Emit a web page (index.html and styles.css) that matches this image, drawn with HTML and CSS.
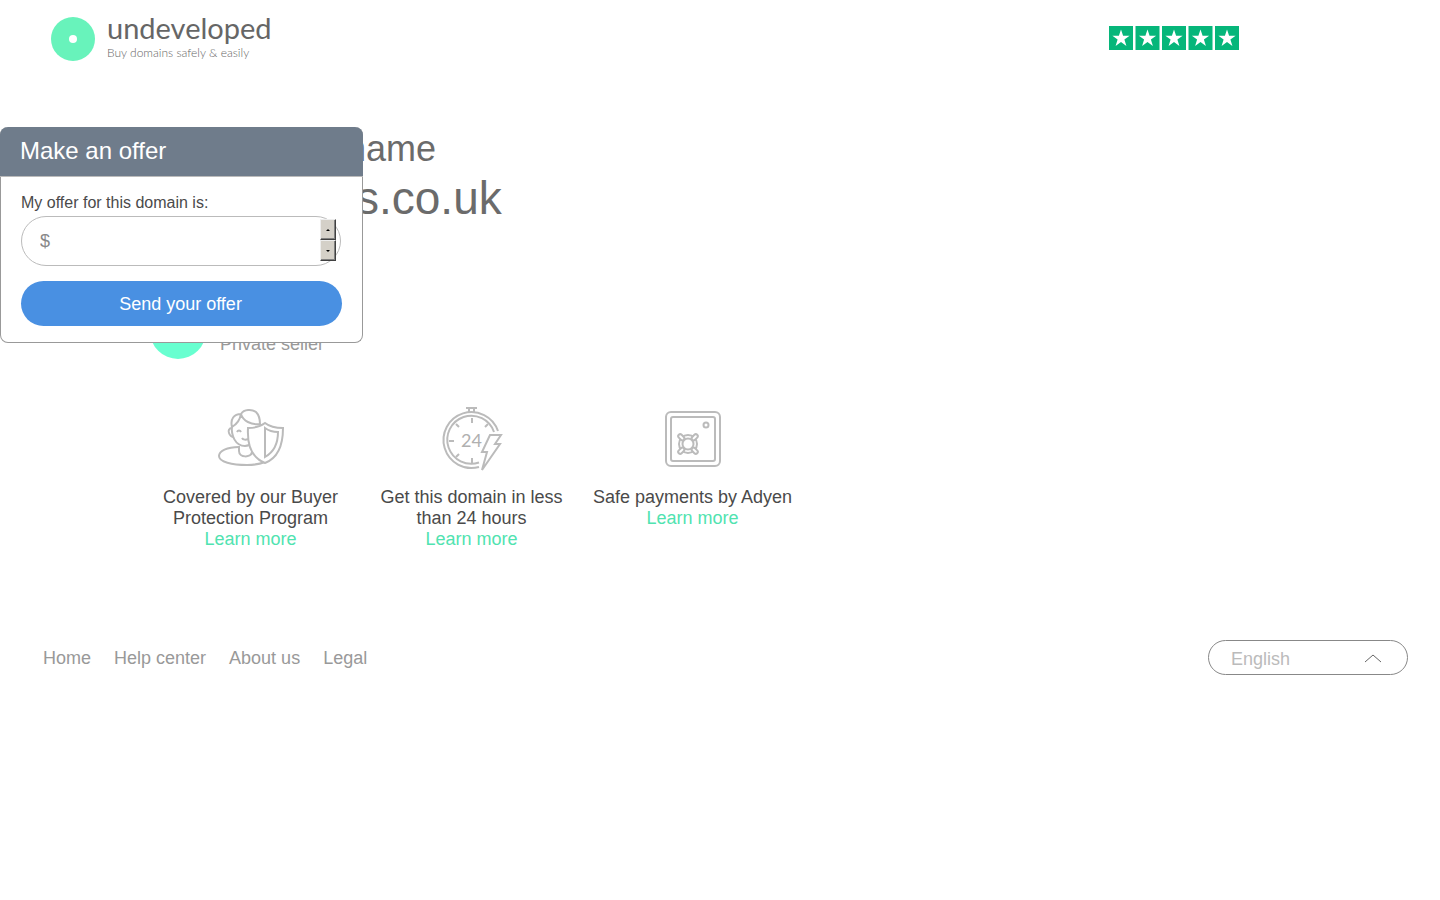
FILE: index.html
```
<!doctype html>
<html lang="en">
<head>
    <meta charset="UTF-8">
    <title>Undeveloped</title>
    <link rel="stylesheet" href="styles.css">
</head>
<body>
    <header class="header">
        <a class="logo" href="#">
            <svg width="44" height="44" viewBox="0 0 44 44" aria-hidden="true">
                <circle cx="22" cy="22" r="22" fill="#68f3bb"/>
                <circle cx="22" cy="22" r="4" fill="#fff"/>
            </svg>
            <span class="logo-text">
                <span class="logo-name">undeveloped</span>
                <span class="logo-tagline">Buy domains safely &amp; easily</span>
            </span>
        </a>
        <svg class="rating" width="130" height="24" viewBox="0 0 130 24" role="img" aria-label="5 stars">
            <defs>
                <g id="star">
                    <rect width="24" height="24" fill="#06b67a"/>
                    <path d="M12 3.5l2.1 6.2h6.5l-5.2 3.9 2 6.3-5.4-3.9-5.4 3.9 2-6.3-5.2-3.9h6.5z" fill="#fff"/>
                </g>
            </defs>
            <use href="#star" x="0"/>
            <use href="#star" x="26.5"/>
            <use href="#star" x="53"/>
            <use href="#star" x="79.5"/>
            <use href="#star" x="106"/>
        </svg>
    </header>

    <main class="main">
        <div class="title">
            <h2>name</h2>
            <h1>s.co.uk</h1>
        </div>
        <div class="seller">
            <span class="avatar"></span>
            <span>Private seller</span>
        </div>

        <form class="offer">
            <h3 class="offer-title">Make an offer</h3>
            <div class="offer-body">
                <label for="amount">My offer for this domain is:</label>
                <div class="amount-wrap">
                    <input type="number" id="amount" name="amount" placeholder="$">
                    <div class="spinner">
                        <button type="button" aria-label="Increase"><svg width="4" height="2" viewBox="0 0 4 2"><path d="M0 2L2 0L4 2z"/></svg></button>
                        <button type="button" aria-label="Decrease"><svg width="4" height="2" viewBox="0 0 4 2"><path d="M0 0L2 2L4 0z"/></svg></button>
                    </div>
                </div>
                <button type="submit" class="send">Send your offer</button>
            </div>
        </form>

        <div class="features">
            <div class="feature">
                <svg class="icon" width="68" height="68" viewBox="0 0 68 68" aria-hidden="true">
                    <path d="M22 43C10 43 2 47 2 52c0 6 13 9 28 9 7 0 13-1 18-3"/>
                    <path d="M22 42v5c0 7 12 7 13 1"/>
                    <path d="M15 22c-1 9 3 20 13 20 3 0 5-1 7-3"/>
                    <path d="M15 24c-3 0-4 3-3 5 1 3 2 4 5 4"/>
                    <path d="M15 23C13 15 17 10 24 10c3-5 11-5 15-2 3 3 4 7 4 12-9 1-17-3-19-10-1 6-4 10-9 13z"/>
                    <path d="M20 28c1-2 3-2 4 0M25 34c1 2 4 2 6 1"/>
                    <path d="M31 24c6 0 12-1 17-5 5 4 11 5 18 5 0 18-5 30-18 35-13-5-18-17-17-35z" fill="#fff"/>
                    <path d="M48 24c4 3 8 4 13 4 0 12-4 20-13 25z"/>
                </svg>
                <p>Covered by our Buyer Protection Program</p>
                <a href="#">Learn more</a>
            </div>
            <div class="feature">
                <svg class="icon" width="68" height="68" viewBox="0 0 68 68" aria-hidden="true">
                    <path d="M28 4h11M31 4v5M36 4v5"/>
                    <path d="M60 27A28 28 0 1 0 41 63"/>
                    <path d="M56 28A24 24 0 1 0 41 58.500"/>
                    <path d="M34 14v5M50 20l-3 3M18 20l3 3M11 37h5M18 53l3-3M34 59v-5"/>
                    <text x="23" y="43">24</text>
                    <path d="M52 31h11l-6 9h5L44 66l5-18h-5z" fill="#fff"/>
                </svg>
                <p>Get this domain in less than 24 hours</p>
                <a href="#">Learn more</a>
            </div>
            <div class="feature">
                <svg class="icon" width="68" height="68" viewBox="0 0 68 68" aria-hidden="true">
                    <rect x="7" y="8" width="54" height="54" rx="5"/>
                    <rect x="12" y="13" width="44" height="44" rx="2"/>
                    <circle cx="47" cy="21" r="2.500"/>
                    <circle cx="29" cy="40" r="9"/>
                    <circle cx="29" cy="40" r="5.500"/>
                    <g fill="#fff">
                        <rect x="-2" y="-13" width="4" height="7" rx="2" transform="translate(29 40) rotate(45)"/>
                        <rect x="-2" y="-13" width="4" height="7" rx="2" transform="translate(29 40) rotate(135)"/>
                        <rect x="-2" y="-13" width="4" height="7" rx="2" transform="translate(29 40) rotate(225)"/>
                        <rect x="-2" y="-13" width="4" height="7" rx="2" transform="translate(29 40) rotate(315)"/>
                    </g>
                </svg>
                <p>Safe payments by Adyen</p>
                <a href="#">Learn more</a>
            </div>
        </div>
    </main>

    <footer class="footer">
        <nav>
            <a href="#">Home</a>
            <a href="#">Help center</a>
            <a href="#">About us</a>
            <a href="#">Legal</a>
        </nav>
        <div class="language">
            <select aria-label="Language">
                <option>English</option>
            </select>
            <svg width="18" height="10" viewBox="0 0 18 10" aria-hidden="true"><path d="M1 9l8-7 8 7"/></svg>
        </div>
    </footer>
</body>
</html>
```
FILE: styles.css
```
* {
    box-sizing: border-box;
    margin: 0;
    padding: 0;
}
body {
    background: #fff;
    color: #4a4a4a;
    font-family: "Liberation Sans", Arial, sans-serif;
    font-size: 18px;
    line-height: 21px;
}
a {
    text-decoration: none;
}
button, input, select {
    font: inherit;
}
.header {
    display: flex;
    justify-content: space-between;
    align-items: flex-start;
    padding: 12px 201px 0 51px;
    height: 127px;
}
.logo {
    display: flex;
    gap: 12px;
}
.logo svg {
    margin-top: 5px;
}
.logo-text {
    display: flex;
    flex-direction: column;
    font-family: Lato, sans-serif;
}
.logo-name {
    font-size: 29px;
    line-height: 32px;
    color: #666;
}
.logo-tagline {
    font-size: 12px;
    font-weight: 300;
    line-height: 18px;
    color: #666;
}
.rating {
    margin-top: 14px;
}
.main {
    position: relative;
    padding: 0 140px;
}
.title {
    color: #6b6b6b;
    padding-left: 206px;
}
.title h2 {
    font-size: 36px;
    font-weight: normal;
    line-height: 44px;
}
.title h1 {
    font-size: 46px;
    font-weight: normal;
    line-height: 54px;
    padding-left: 10px;
}
.seller {
    display: flex;
    align-items: flex-end;
    gap: 14px;
    margin: 78px 0 0 10px;
    color: #999;
    line-height: 30px;
}
.avatar {
    width: 56px;
    height: 56px;
    border-radius: 50%;
    background: #68ffd0;
}
/* the offer box floats above the title and the seller */
.offer {
    position: absolute;
    top: 0;
    left: 0;
    width: 363px;
    background: #fff;
    border: 1px solid #999;
    border-top: 0;
    border-radius: 8px;
}
.offer-title {
    margin: 0 -1px;
    padding: 0 20px 2px;
    border-bottom: 1px solid #bbb;
    border-radius: 8px 8px 0 0;
    background: #6f7c8b;
    color: #fff;
    font-size: 24px;
    font-weight: normal;
    line-height: 47px;
}
.offer-body {
    padding: 15px 20px 16px;
}
.offer-body label {
    display: block;
    font-size: 16px;
    line-height: 22px;
    margin-bottom: 2px;
}
.amount-wrap {
    position: relative;
    margin: 0 1px 15px 0;
}
.amount-wrap input {
    display: block;
    width: 100%;
    height: 50px;
    padding: 0 18px;
    border: 1px solid #bbb;
    border-radius: 25px;
    background: #fff;
    color: #4a4a4a;
    appearance: textfield;
    -moz-appearance: textfield;
}
.amount-wrap input::-webkit-inner-spin-button {
    -webkit-appearance: none;
}
.amount-wrap input::placeholder {
    color: #888;
}
.spinner {
    position: absolute;
    top: 3px;
    right: 5px;
    width: 16px;
}
.spinner button {
    display: flex;
    align-items: center;
    justify-content: center;
    width: 16px;
    height: 21px;
    border: 1px solid;
    border-color: #eee #404040 #404040 #eee;
    box-shadow: inset -1px -1px 0 #808080;
    background: #d4d0c8;
}
.send {
    display: block;
    width: 100%;
    height: 45px;
    padding: 2px 2px 0 0;
    border: 0;
    border-radius: 23px;
    background: #4990e2;
    color: #fff;
}
.features {
    display: grid;
    grid-template-columns: repeat(3, 221px);
    margin-top: 45px;
    text-align: center;
}
.feature {
    padding: 0 10px;
}
.feature a {
    color: #50e3b0;
}
.icon {
    display: block;
    margin: 0 auto 15px;
    fill: none;
    stroke: #bbb;
    stroke-width: 2;
}
.icon text {
    fill: #b0b0b0;
    stroke: none;
    font-family: Lato, sans-serif;
    font-size: 18px;
}
.footer {
    display: flex;
    justify-content: space-between;
    align-items: center;
    margin-top: 90px;
    padding: 0 32px 0 43px;
}
.footer nav {
    display: flex;
    gap: 23px;
    padding-top: 2px;
}
.footer nav a {
    color: #999;
}
.language {
    position: relative;
    width: 200px;
}
.language select {
    display: block;
    width: 100%;
    height: 35px;
    padding: 4px 22px 0;
    border: 1px solid #888;
    border-radius: 18px;
    background: #fff;
    color: #bbb;
    appearance: none;
}
.language svg {
    position: absolute;
    top: 13px;
    right: 26px;
    fill: none;
    stroke: #666;
    pointer-events: none;
}
```
